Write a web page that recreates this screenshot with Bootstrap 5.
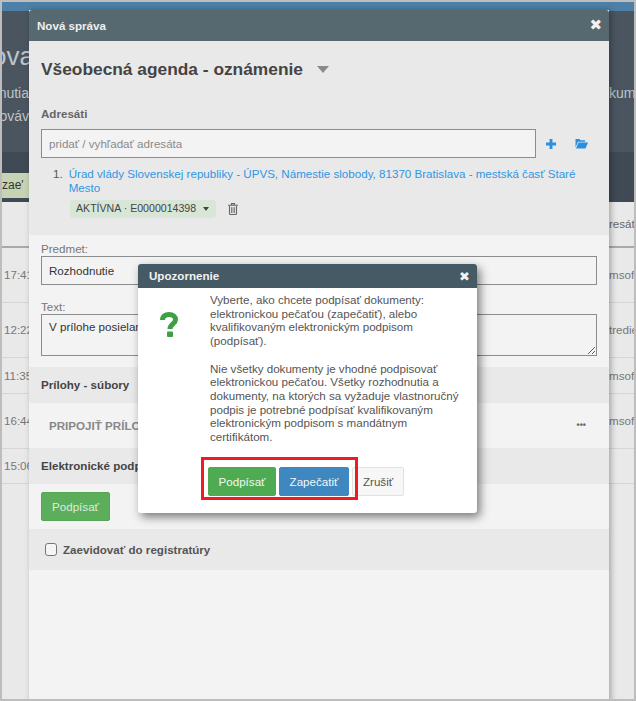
<!DOCTYPE html>
<html lang="sk">
<head>
  <meta charset="UTF-8" />
  <meta name="viewport" content="width=device-width, initial-scale=1.0"/>
  <title>Nová správa</title>
  <link href="https://cdn.jsdelivr.net/npm/bootstrap@5.3.0/dist/css/bootstrap.min.css" rel="stylesheet" />
  <style>
    html, body { height: 701px; overflow: hidden; margin: 0; }
    body { font-family: "Liberation Sans", Arial, sans-serif; font-size: 11.6px; color: #333; background: #e9e9e9; }

    /* stranka v pozadi */
    .shot { position: relative; height: 701px; overflow: hidden; border: 2px solid #bdbdbd; background: #e9e9e9; }
    .top-strip { height: 9px; background: #4d80a8; }
    .hero { height: 141px; background: #4a5560; color: #bfc4c9; font-size: 14px; padding-top: 24px; }
    .hero-row { display: flex; justify-content: space-between; white-space: nowrap; }
    .hero-big { font-size: 26px; line-height: 42px; height: 42px; margin-bottom: 5px; }
    .hero-big .hero-left { width: 32px; }
    .hero-line { height: 23px; line-height: 23px; }
    .hero-right { width: 25px; overflow: hidden; }
    .hero-left { width: 27px; overflow: hidden; display: flex; justify-content: flex-end; }
    .band { height: 50px; background: #3f4a55; padding-top: 21px; }
    .band-tag { width: 27px; height: 25px; background: #c6d3b4; color: #333; line-height: 25px; font-size: 12px; overflow: hidden; white-space: nowrap; }
    .head-row { height: 46px; border-bottom: 2px solid #a9a9a9; color: #666; display: flex; justify-content: flex-end; align-items: center; }
    .bg-row { display: flex; justify-content: space-between; align-items: center; padding-left: 2px; color: #777; border-bottom: 1px solid #d6d6d6; white-space: nowrap; }
    .bg-cell { width: 25px; overflow: hidden; }

    /* hlavne okno */
    .msg-window { position: absolute; left: 27px; top: 8px; width: 580px; height: 700px; background: #f3f3f3; box-shadow: 2px 0 6px rgba(0,0,0,.3); }
    .msg-head { height: 31px; background: #566970; color: #eee; font-weight: 700; padding: 0 7px 0 8px; display: flex; align-items: center; justify-content: space-between; border-radius: 3px 3px 0 0; }
    .close-x { font-size: 15px; font-weight: 700; line-height: 1; color: #f2f2f2; font-family: "DejaVu Sans", sans-serif; }
    .sec-top { background: #e9e9e9; height: 194px; padding: 13px 12px 0; }
    .msg-title { font-size: 17.33px; font-weight: 700; color: #444; height: 30px; line-height: 30px; display: flex; align-items: center; gap: 14px; }
    .caret-down { width: 0; height: 0; border-left: 6px solid transparent; border-right: 6px solid transparent; border-top: 7px solid #8a8a8a; }
    .sec-label { font-weight: 700; color: #666; margin-top: 23px; line-height: 14px; }
    .field { border: 1px solid #8c8c8c; background: #f3f3f3; border-radius: 0; font-size: 11.6px; color: #333; padding: 0 7px; box-shadow: none; }
    .field::placeholder { color: #8a8a8a; }
    .addr-input { width: 495px; height: 29px; }
    .addr-row { margin-top: 8px; display: flex; align-items: center; }
    .addr-icons { display: flex; align-items: center; margin-left: 9px; gap: 18px; }
    .addr-item { display: flex; margin-top: 9px; padding-left: 12px; line-height: 14px; color: #555; }
    .addr-item a { color: #2f96e4; text-decoration: none; margin-left: 6px; width: 510px; }
    .status-row { display: flex; align-items: center; margin: 5px 0 0 29px; gap: 12px; }
    .status-pill { background: #d8e6d8; color: #444; font-size: 10.6px; border-radius: 3px; height: 18px; width: 146px; padding: 0 7px 0 6px; display: flex; align-items: center; justify-content: space-between; white-space: nowrap; }
    .caret-mini { width: 0; height: 0; border-left: 3px solid transparent; border-right: 3px solid transparent; border-top: 4px solid #444; }
    .sec-form { height: 132px; padding: 7px 12px 0; }
    .sec-form label { display: block; color: #777; line-height: 14px; }
    .subject-input { width: 556px; height: 29px; margin-bottom: 15px; display: block; }
    .text-input { width: 556px; height: 42px; display: block; padding: 5px 7px; line-height: 14px; }
    .sec-grey { background: #e9e9e9; padding: 0 12px; display: flex; align-items: center; font-weight: 700; color: #444; height: 36px; }
    .sec-attach { height: 45px; padding: 0 23px 0 20px; display: flex; align-items: center; justify-content: space-between; font-weight: 700; color: #888; }
    .attach-dots { font-size: 9px; color: #666; }
    .sec-sign { height: 45px; padding: 8px 12px 0; }
    .btn-sign { background: #5cad5c; border: 1px solid #57a557; color: #ddeedd; font-size: 11.6px; width: 69px; height: 29px; padding: 0; border-radius: 2px; }
    .sec-check { background: #e9e9e9; height: 41px; padding: 0 16px; display: flex; align-items: center; gap: 6px; font-weight: 700; color: #555; }
    .sec-check input { width: 12px; height: 13px; margin: 0; border: 1px solid #767676; background-color: #f5f5f5; border-radius: 2px; }

    /* dialog */
    .alert-box { position: absolute; left: 136px; top: 262px; width: 339px; height: 249px; background: #fff; border-radius: 3px; box-shadow: 3px 4px 10px rgba(0,0,0,.5); }
    .alert-head { height: 24px; background: #455a64; color: #f2f2f2; font-weight: 700; padding: 0 7px 0 11px; display: flex; align-items: center; justify-content: space-between; border-radius: 3px 3px 0 0; }
    .alert-head .close-x { font-size: 13px; }
    .alert-body { display: flex; padding-top: 5px; }
    .alert-icon { width: 72px; padding: 19px 0 0 22px; }
    .alert-text { width: 256px; color: #555; line-height: 13.7px; }
    .alert-text p { margin: 0 0 13.7px; }
    .alert-btns { display: flex; gap: 3px; padding-left: 70px; margin-top: 10px; }
    .alert-btns .btn { height: 29px; padding: 0; font-size: 11.6px; border-radius: 2px; }
    .btn-podpis { width: 68px; background: #4fab52; border: 1px solid #4fab52; color: #f2f8f2; }
    .btn-pecat { width: 70px; background: #3f87bf; border: 1px solid #3f87bf; color: #f2f6fa; }
    .btn-zrusit { width: 52px; background: #f7f7f7; border: 1px solid #e2e2e2; color: #555; }
    .red-frame { position: absolute; left: 63px; top: 193px; width: 157px; height: 43px; border: 3px solid #ed1c24; pointer-events: none; }
  </style>
</head>
<body>
  <div class="shot">
    <div class="top-strip"></div>
    <div class="hero">
      <div class="hero-row hero-big"><span class="hero-left">ova</span></div>
      <div class="hero-row hero-line"><span class="hero-left">nutia</span><span class="hero-right">kum</span></div>
      <div class="hero-row hero-line"><span class="hero-left">ováv</span></div>
    </div>
    <div class="band"><div class="band-tag">zae'</div></div>
    <div class="head-row"><span class="bg-cell">resáti</span></div>
    <div class="bg-row" style="height:55px"><span class="bg-cell">17:41</span><span class="bg-cell">msofl</span></div>
    <div class="bg-row" style="height:55px"><span class="bg-cell">12:22</span><span class="bg-cell">tredie</span></div>
    <div class="bg-row" style="height:36px"><span class="bg-cell">11:35</span><span class="bg-cell">msofl</span></div>
    <div class="bg-row" style="height:55px"><span class="bg-cell">16:44</span><span class="bg-cell">msofl</span></div>
    <div class="bg-row" style="height:35px"><span class="bg-cell">15:06</span></div>

    <div class="msg-window">
      <div class="msg-head"><span>Nová správa</span><span class="close-x">✖</span></div>
      <div class="sec-top">
        <div class="msg-title">Všeobecná agenda - oznámenie <span class="caret-down"></span></div>
        <div class="sec-label">Adresáti</div>
        <div class="addr-row">
          <input class="field addr-input" type="text" placeholder="pridať / vyhľadať adresáta" />
          <div class="addr-icons">
            <svg width="12" height="12" viewBox="0 0 12 12"><path d="M4.600 1h2.800v3.600H11v2.800H7.400V11H4.600V7.400H1V4.600h3.600z" fill="#2a8fdc"/></svg>
            <svg width="13" height="11" viewBox="0 0 13 11"><path d="M0.500 1h4l1 1.300h4.500v1.500H3L.5 9.500zM3.500 4.600H13L10.500 10.500H1z" fill="#2a8fdc"/></svg>
          </div>
        </div>
        <div class="addr-item"><span>1.</span><a href="#">Úrad vlády Slovenskej republiky - ÚPVS, Námestie slobody, 81370 Bratislava - mestská časť Staré Mesto</a></div>
        <div class="status-row">
          <div class="status-pill"><span>AKTÍVNA · E0000014398</span><span class="caret-mini"></span></div>
          <svg width="10" height="12" viewBox="0 0 10 12"><path d="M0 2.200h10M3.500 2V.6h3V2" fill="none" stroke="#666" stroke-width="1.100"/><path d="M1.500 3v7.600c0 .5.400.9.900.9h5.200c.5 0 .9-.4.900-.9V3" fill="none" stroke="#666" stroke-width="1.100"/><path d="M3.500 4.200v5.800M5 4.200v5.800M6.500 4.200v5.800" stroke="#666" stroke-width=".8"/></svg>
        </div>
      </div>
      <div class="sec-form">
        <label>Predmet:</label>
        <input class="field subject-input" type="text" value="Rozhodnutie" />
        <label>Text:</label>
        <textarea class="field text-input" rows="2">V prílohe posielame rozhodnutie</textarea>
      </div>
      <div class="sec-grey">Prílohy - súbory</div>
      <div class="sec-attach"><span>PRIPOJIŤ PRÍLOHY</span><span class="attach-dots">•••</span></div>
      <div class="sec-grey">Elektronické podpisy</div>
      <div class="sec-sign"><button class="btn btn-sign" type="button">Podpísať</button></div>
      <div class="sec-check"><input class="form-check-input" type="checkbox" /><span>Zaevidovať do registratúry</span></div>
    </div>

    <div class="alert-box">
      <div class="alert-head"><span>Upozornenie</span><span class="close-x">✖</span></div>
      <div class="alert-body">
        <div class="alert-icon">
          <svg width="18" height="25" viewBox="0 0 18 25"><path d="M2.500 8C2.500 4 5.500 2.500 9 2.500C13 2.500 15.500 4.800 15.500 7.800C15.500 12 10 12 10 17" fill="none" stroke="#3f9f45" stroke-width="5"/><rect x="7" y="19.500" width="6" height="5.500" rx="1" fill="#3f9f45"/></svg>
        </div>
        <div class="alert-text">
          <p>Vyberte, ako chcete podpísať dokumenty: elektronickou pečaťou (zapečatiť), alebo kvalifikovaným elektronickým podpisom (podpísať).</p>
          <p>Nie všetky dokumenty je vhodné podpisovať elektronickou pečaťou. Všetky rozhodnutia a dokumenty, na ktorých sa vyžaduje vlastnoručný podpis je potrebné podpísať kvalifikovaným elektronickým podpisom s mandátnym certifikátom.</p>
        </div>
      </div>
      <div class="alert-btns">
        <button class="btn btn-podpis" type="button">Podpísať</button>
        <button class="btn btn-pecat" type="button">Zapečatiť</button>
        <button class="btn btn-zrusit" type="button">Zrušiť</button>
      </div>
      <div class="red-frame"></div>
    </div>
  </div>
  <script src="https://cdn.jsdelivr.net/npm/bootstrap@5.3.0/dist/js/bootstrap.bundle.min.js"></script>
</body>
</html>
